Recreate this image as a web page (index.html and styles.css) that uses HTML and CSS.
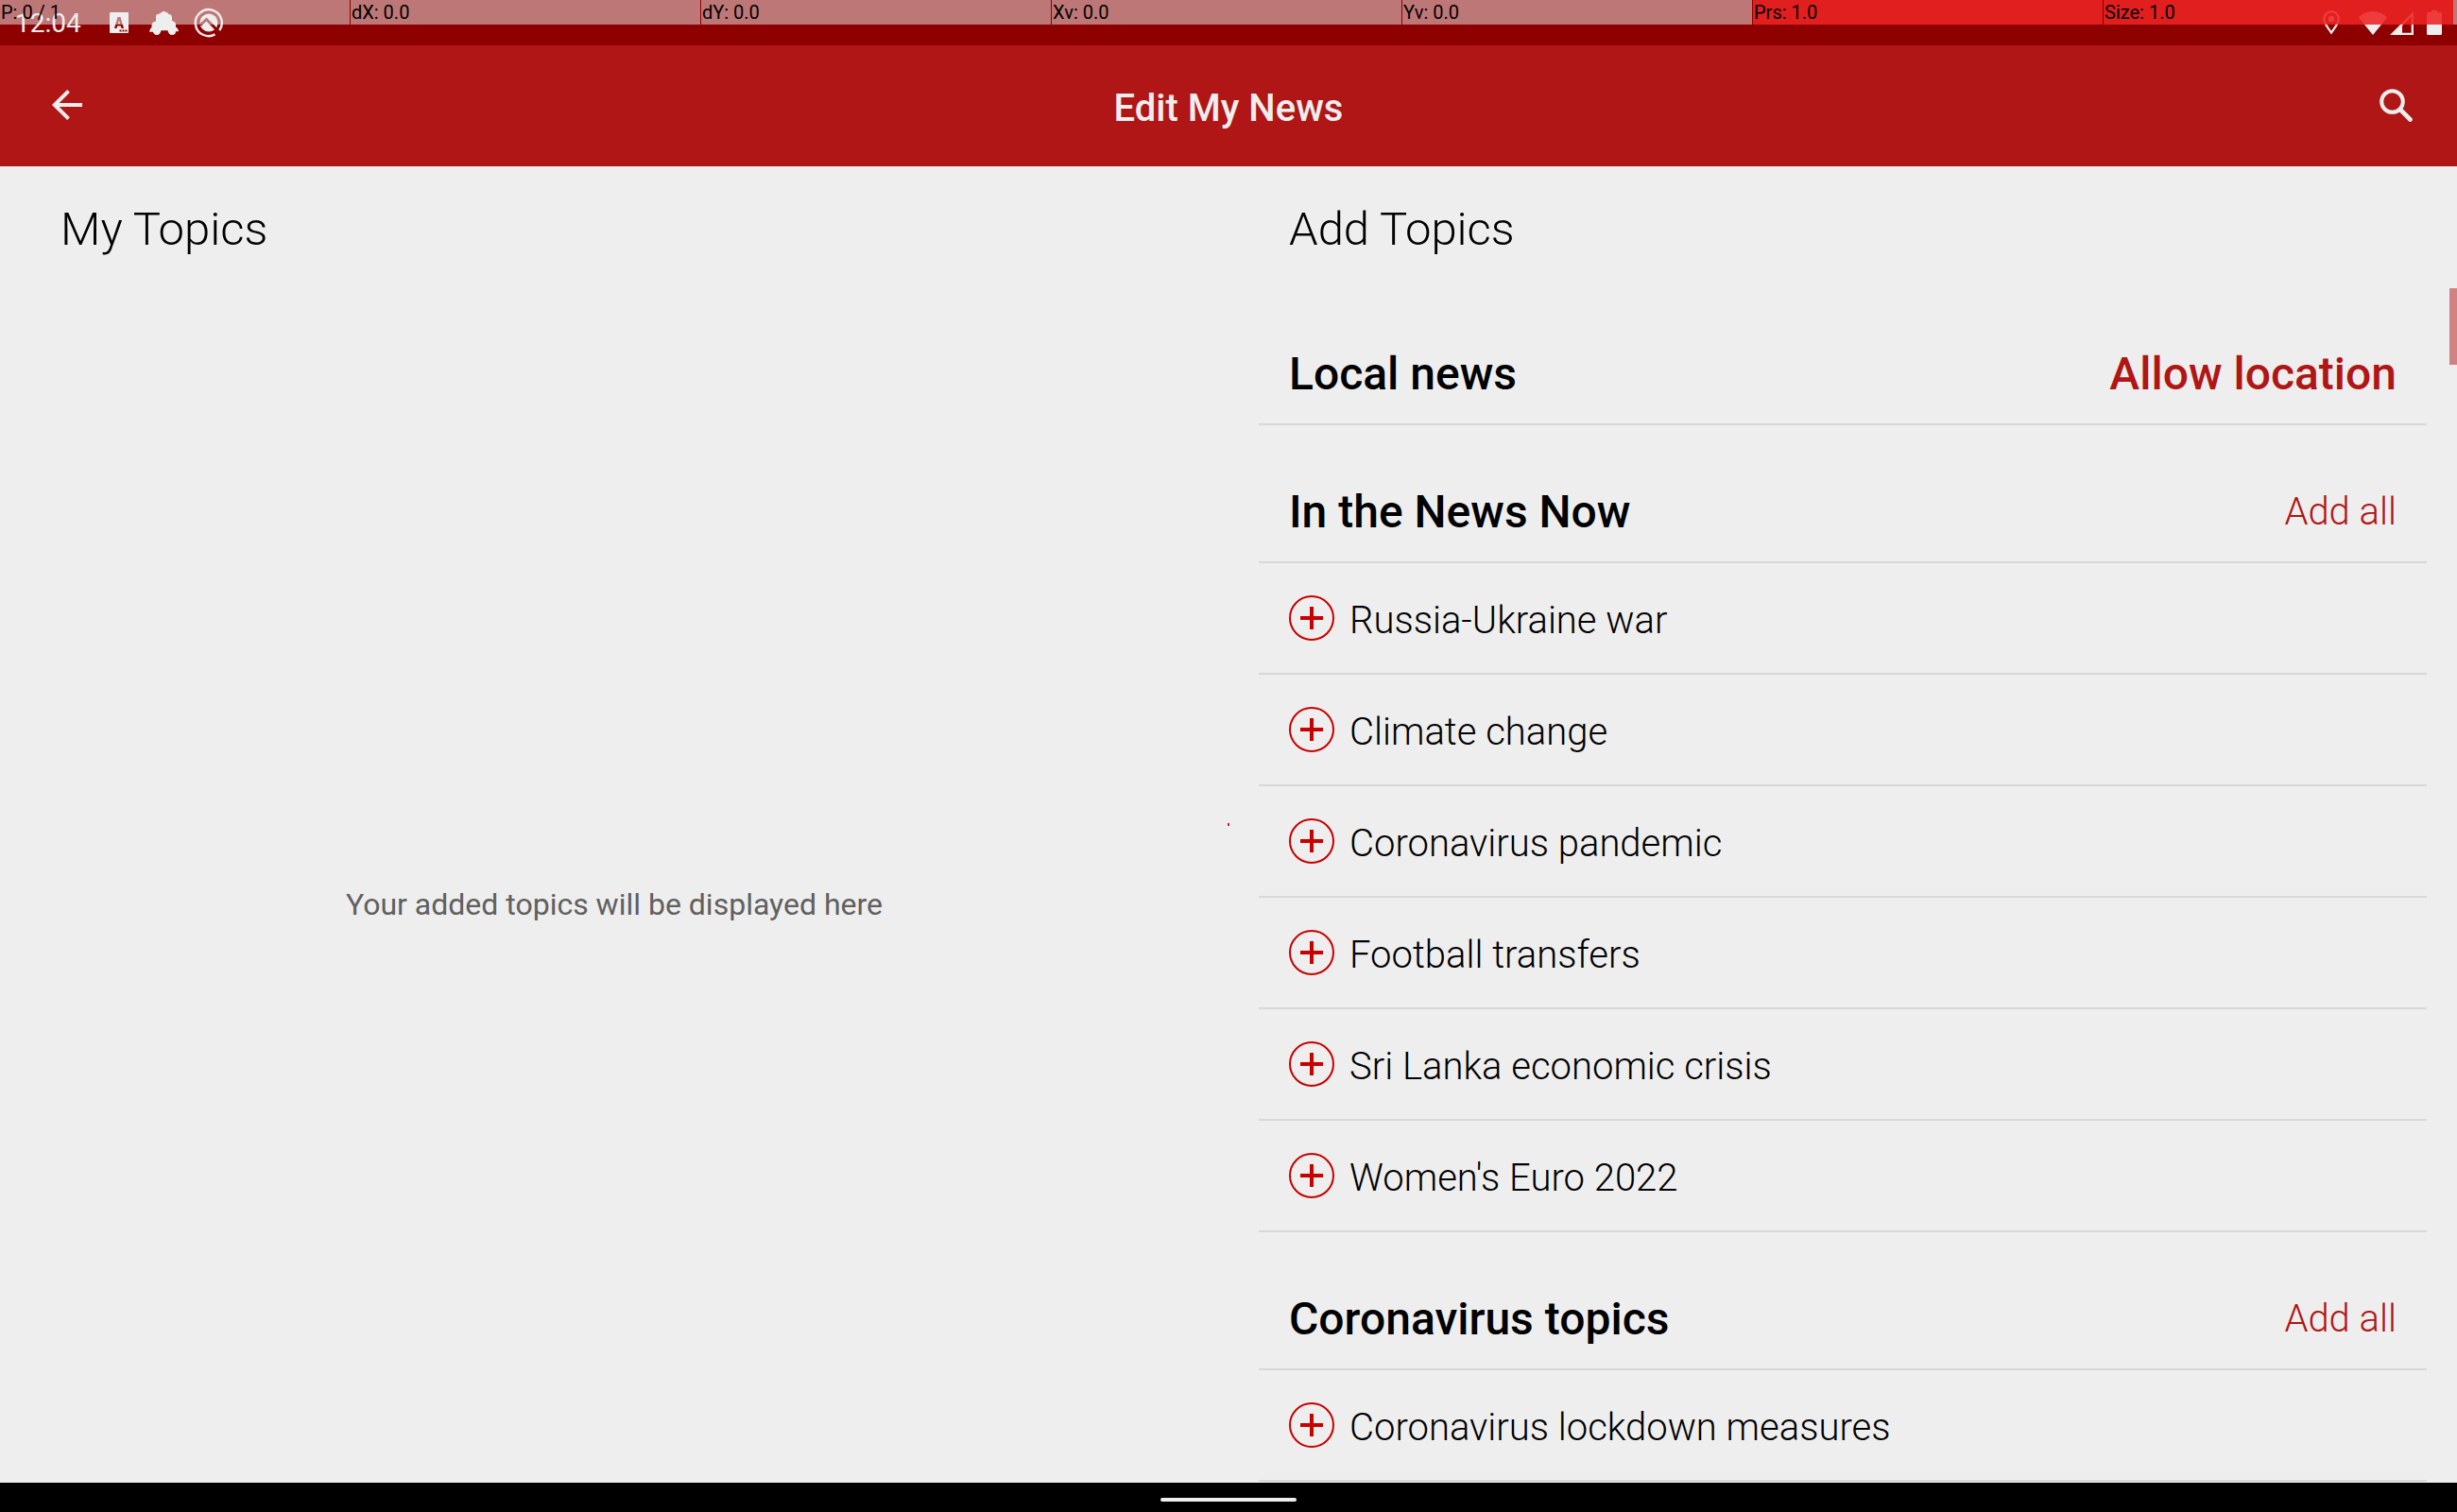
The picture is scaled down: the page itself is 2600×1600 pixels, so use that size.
FILE: index.html
```html
<!DOCTYPE html>
<html lang="en">
<head>
<meta charset="utf-8">
<title>Edit My News</title>
<link rel="stylesheet" href="styles.css">
</head>
<body>
<div class="screen">
  <div class="status-bar">
    <span class="clock">12:04</span>
    <div class="notifications">
      <svg width="20" height="22" viewBox="0 0 20 22"><path fill="currentColor" fill-rule="evenodd" d="M1 0h18q1 0 1 1v20q0 1-1 1H1q-1 0-1-1V1q0-1 1-1zM8.500 5L5 17h2.500l.7-2.500h3.600l.7 2.500H15L11.500 5zm1.500 3.500l1 3.500H9zM10.500 18.500v2h2v-2zm3 0v2h2v-2zm3 0v2h2v-2z"/></svg>
      <svg width="31" height="25" viewBox="0 0 31 25"><path fill="currentColor" d="M11 2.500Q11.500 1 13.500 1l1-1h2l1 1q2.500 0 3 2l2 .5q1.500 1 1.500 3V10q3.500.5 4 3.500v3q2 1 3 4v.7h-3q0 3.500-4 3.800-3.500 0-4.500-4.800h-7q-1 4.800-4.500 4.800-3.500-.3-4-3.300H0q.5-3.500 2.500-4.700v-3q.5-3 4.500-3.500V5.500q0-2 1.500-2.500z"/></svg>
      <svg width="32" height="32" viewBox="0 0 32 32"><path d="M27 24.500A14 14 0 1 0 22.500 28.400" fill="none" stroke="currentColor" stroke-width="2.400"/><circle cx="16" cy="16" r="9.500" fill="currentColor"/><path d="M7 18.500l6.500-6L27 26" fill="none" stroke="#8e0000" stroke-width="3"/></svg>
    </div>
    <div class="system">
      <svg class="pin" width="18" height="26" viewBox="0 0 18 26"><path d="M9 1.200C4.600 1.200 1.200 4.600 1.200 9c0 5 4 9 7.800 14.500C12.800 18 16.800 14 16.800 9c0-4.400-3.400-7.800-7.800-7.800z" fill="none" stroke="currentColor" stroke-width="2.200"/><circle cx="9" cy="9" r="3.200" fill="currentColor"/></svg>
      <svg class="wifi" width="30" height="25" viewBox="0 0 30 25"><path fill="currentColor" d="M15 25L0 6.500Q6 0 15 0t15 6.500z"/></svg>
      <svg class="signal" width="25" height="25" viewBox="0 0 25 25"><path fill="currentColor" fill-rule="evenodd" d="M25 0v25H0zM22.700 5.500L13 15.200v7.500h9.700z"/></svg>
      <svg width="16" height="26" viewBox="0 0 16 26"><path fill="currentColor" d="M5 0h6v2h3.500Q16 2 16 3.500v21q0 1.500-1.500 1.500h-13Q0 26 0 24.500v-21Q0 2 1.500 2H5z"/></svg>
    </div>
    <div class="pointer-strip">
      <span>P: 0 / 1</span><span>dX: 0.0</span><span>dY: 0.0</span><span>Xv: 0.0</span><span>Yv: 0.0</span><span class="hot">Prs: 1.0</span><span class="hot">Size: 1.0</span><i></i>
    </div>
  </div>

  <header class="app-bar">
    <button class="icon-button" aria-label="Back"><svg width="34" height="34" viewBox="0 0 34 34"><path d="M33 16H4M18.500 1.400L3.800 16l14.700 14.600" fill="none" stroke="currentColor" stroke-width="4"/></svg></button>
    <h1>Edit My News</h1>
    <button class="icon-button" aria-label="Search"><svg width="36" height="36" viewBox="0 0 36 36"><g fill="none" stroke="currentColor"><circle cx="13.500" cy="13.500" r="11.300" stroke-width="4"/><path d="M22.500 22.500L32.500 32.500" stroke-width="4.600" stroke-linecap="round"/></g></svg></button>
  </header>

  <main class="columns">
    <section class="column mine">
      <h2>My Topics</h2>
      <p class="empty">Your added topics will be displayed here</p>
    </section>
    <section class="column add">
      <h2>Add Topics</h2>
      <div class="group-head"><h3>Local news</h3><button class="allow">Allow location</button></div>
      <div class="group-head"><h3>In the News Now</h3><button>Add all</button></div>
      <ul>
        <li><button><svg class="plus" viewBox="0 0 48 48"><use href="#plus"/></svg><span>Russia-Ukraine war</span></button></li>
        <li><button><svg class="plus" viewBox="0 0 48 48"><use href="#plus"/></svg><span>Climate change</span></button></li>
        <li><button><svg class="plus" viewBox="0 0 48 48"><use href="#plus"/></svg><span>Coronavirus pandemic</span></button></li>
        <li><button><svg class="plus" viewBox="0 0 48 48"><use href="#plus"/></svg><span>Football transfers</span></button></li>
        <li><button><svg class="plus" viewBox="0 0 48 48"><use href="#plus"/></svg><span>Sri Lanka economic crisis</span></button></li>
        <li><button><svg class="plus" viewBox="0 0 48 48"><use href="#plus"/></svg><span>Women's Euro 2022</span></button></li>
      </ul>
      <div class="group-head"><h3>Coronavirus topics</h3><button>Add all</button></div>
      <ul>
        <li><button><svg class="plus" viewBox="0 0 48 48"><use href="#plus"/></svg><span>Coronavirus lockdown measures</span></button></li>
      </ul>
    </section>
    <div class="scroll-thumb"></div>
    <div class="touch-point"></div>
  </main>

  <footer class="nav-bar"><div class="handle"></div></footer>
</div>
<svg class="defs" width="0" height="0"><symbol id="plus" viewBox="0 0 48 48"><circle cx="24" cy="24" r="23" fill="none" stroke="#c70000" stroke-width="2"/><path d="M12 24h24M24 12v24" stroke="#c70000" stroke-width="4"/></symbol></svg>
</body>
</html>
```
FILE: styles.css
```css
* {
  box-sizing: border-box;
}

body {
  margin: 0;
  background: #eee;
  color: #000;
  font-family: Roboto, "Noto Sans", sans-serif;
}

h1, h2, h3, p, ul {
  margin: 0;
  padding: 0;
}

ul {
  list-style: none;
}

svg {
  display: block;
  flex: none;
}

button {
  margin: 0;
  padding: 0;
  border: 0;
  background: none;
  font: inherit;
  color: inherit;
  cursor: pointer;
}

.defs {
  position: absolute;
}

.screen {
  display: flex;
  flex-direction: column;
  height: 100vh;
  overflow: hidden;
}

/* System status bar with the pointer read-out laid over it */
.status-bar {
  position: relative;
  display: flex;
  align-items: center;
  flex: none;
  height: 48px;
  padding: 0 16px;
  background: #8e0000;
  color: #eee;
}

.clock {
  font-size: 28px;
  line-height: 32px;
  padding-top: 2px;
}

.notifications {
  display: flex;
  align-items: center;
  gap: 20px;
  margin-left: 30px;
}

.notifications svg + svg {
  margin-left: 2px;
}

.notifications svg:last-child {
  margin-left: -4px;
}

.system {
  display: flex;
  align-items: center;
  margin-left: auto;
}

.wifi {
  margin-left: 20px;
}

.signal {
  margin: 0 14px 0 3px;
}

.pointer-strip {
  position: absolute;
  inset: 0 0 auto;
  display: flex;
  gap: 1px;
  height: 26px;
  font-size: 20px;
  line-height: 26px;
  color: #000;
}

.pointer-strip span {
  flex: 1;
  padding-left: 1px;
  background: rgba(238, 238, 238, 0.5);
}

.pointer-strip .hot {
  background: rgba(238, 35, 35, 0.88);
}

.pointer-strip i {
  width: 4px;
  margin-left: -1px;
  background: rgba(238, 238, 238, 0.5);
}

/* App bar */
.app-bar {
  display: grid;
  grid-template-columns: 1fr auto 1fr;
  align-items: center;
  flex: none;
  height: 128px;
  padding: 0 46px 0 54px;
  background: #b01616;
  color: #eee;
}

.app-bar {
  padding: 0 48px;
}

.icon-button {
  justify-self: start;
  padding-left: 6px;
}

.icon-button:last-child {
  justify-self: end;
  margin-right: -2px;
}

.app-bar h1 {
  font-size: 40px;
  line-height: 48px;
  font-weight: 500;
  padding-top: 6px;
}

/* Two-column topic editor */
.columns {
  position: relative;
  display: grid;
  grid-template-columns: 1fr 1fr;
  flex: 1;
  min-height: 0;
}

.column {
  display: flex;
  flex-direction: column;
  min-height: 0;
  padding: 0 32px;
  overflow: hidden;
}

.column h2 {
  flex: none;
  padding: 39px 32px 33px;
  font-size: 49px;
  line-height: 56px;
  font-weight: 300;
}

.empty {
  display: flex;
  align-items: center;
  justify-content: center;
  flex: 1;
  padding-top: 40px;
  font-size: 32px;
  line-height: 40px;
  color: #606060;
}

.group-head {
  display: flex;
  align-items: center;
  justify-content: space-between;
  flex: none;
  height: 146px;
  padding: 40px 32px 0;
  border-bottom: 2px solid #d8d8d8;
}

.group-head h3 {
  font-size: 48px;
  line-height: 56px;
  font-weight: 500;
}

.group-head button {
  font-size: 40px;
  line-height: 48px;
  font-weight: 300;
  color: #b01616;
}

.group-head .allow {
  font-size: 48px;
  line-height: 56px;
  font-weight: 500;
}

.column li {
  border-bottom: 2px solid #d8d8d8;
}

.column li button {
  display: flex;
  align-items: center;
  gap: 16px;
  width: 100%;
  height: 116px;
  padding: 0 32px;
  font-size: 40px;
  line-height: 48px;
  font-weight: 300;
  text-align: left;
}

.column li span {
  padding-top: 6px;
}

.plus {
  width: 48px;
  height: 48px;
}

.scroll-thumb {
  position: absolute;
  top: 129px;
  right: 0;
  width: 8px;
  height: 81px;
  background: rgba(176, 22, 22, 0.5);
}

.touch-point {
  position: absolute;
  top: 50%;
  left: 50%;
  width: 2px;
  height: 3px;
  margin: -2px 0 0 -1px;
  background: #e31f1f;
}

/* Gesture navigation bar */
.nav-bar {
  display: flex;
  align-items: center;
  justify-content: center;
  flex: none;
  height: 31px;
  padding-top: 4px;
  background: #000;
}

.handle {
  width: 144px;
  height: 4px;
  border-radius: 2px;
  background: #eee;
}
```
